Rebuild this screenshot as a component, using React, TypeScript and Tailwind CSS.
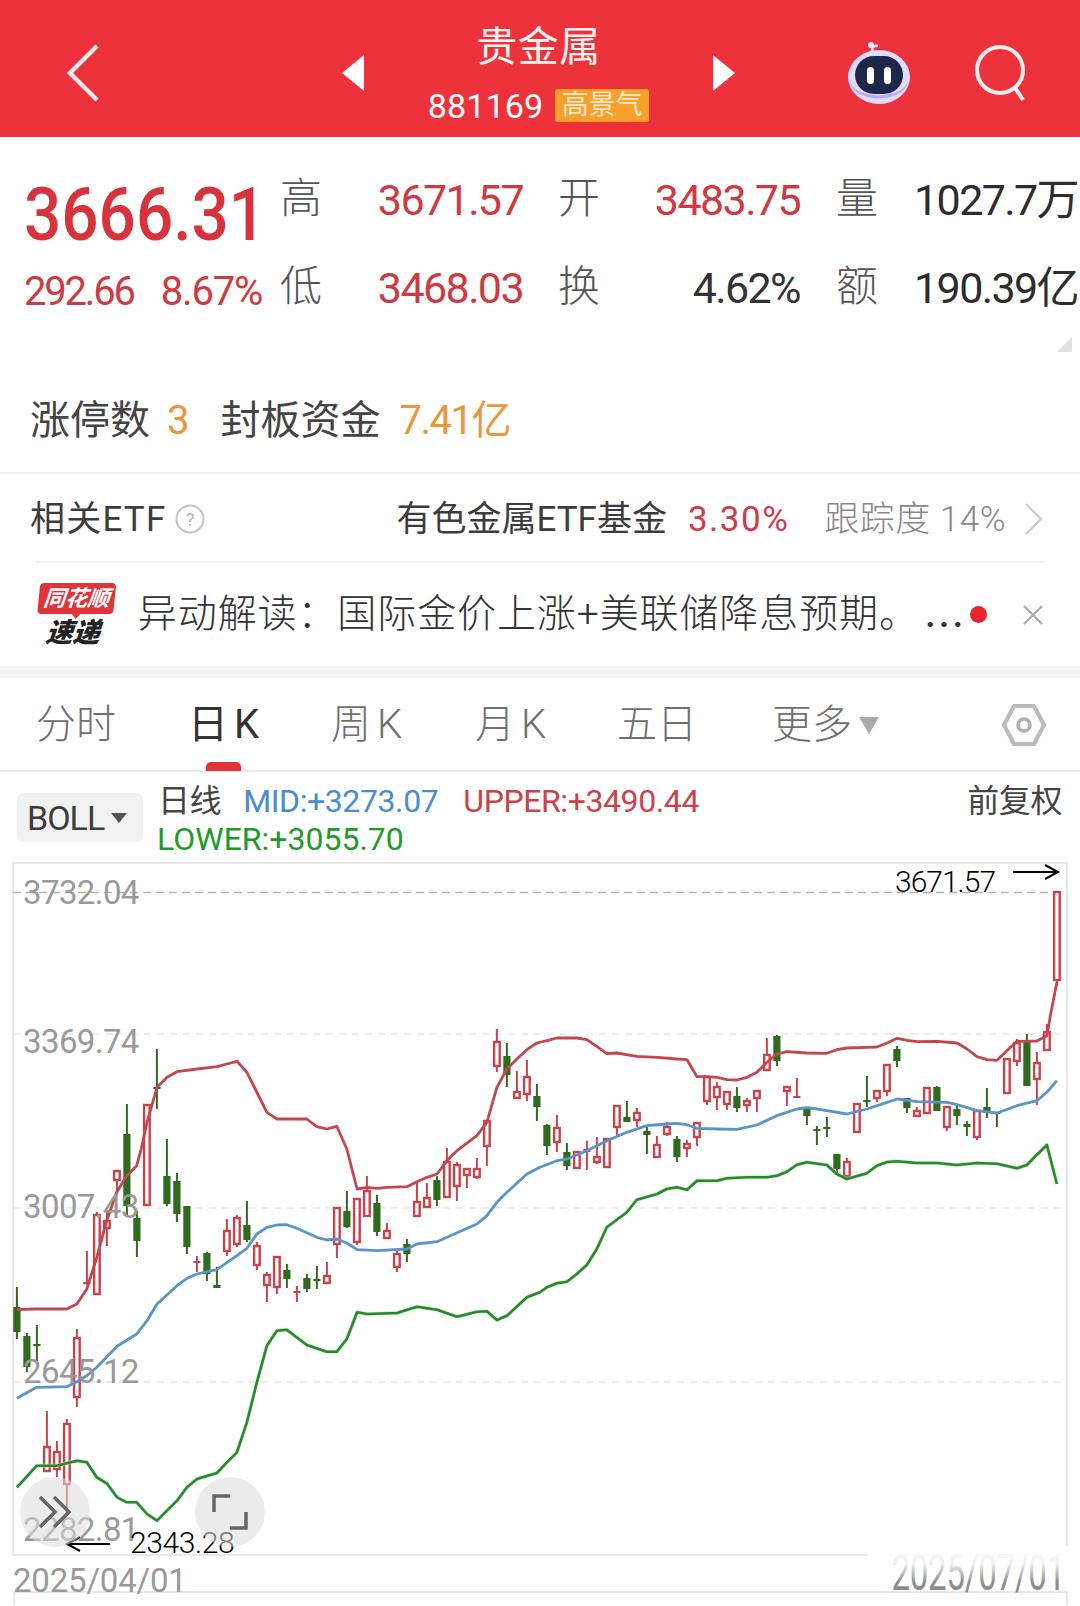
import React from "react";

const F = "font-['Roboto','Noto_Sans_CJK_SC',sans-serif]";

type P = [number, number];
const L = (z: number) => z / 2.904;
const R = (z: number) => 540 + z / 2.904;
const Y1 = (z: number) => 860 + z / 3;
const Y2 = (z: number) => 1240 + z / 3;
const pts = (a: number[], fx: (n: number) => number, fy: (n: number) => number): P[] => {
  const o: P[] = [];
  for (let i = 0; i < a.length; i += 2) o.push([fx(a[i]), fy(a[i + 1])]);
  return o;
};
const toD = (p: P[]) => "M" + p.map((q) => q[0].toFixed(1) + " " + q[1].toFixed(1)).join("L");

const upper = [
  ...pts([49, 212, 100, 210, 194, 210, 223, 195, 252, 150], L, Y2),
  ...pts([281, 1195, 310, 1085, 339, 1000, 368, 950, 397, 920, 410, 870, 427, 790, 456, 685, 485, 655, 514, 638, 572, 630, 630, 623, 659, 615, 688, 607, 717, 640, 775, 760, 804, 780, 891, 780, 920, 803, 949, 810, 978, 802, 1007, 870, 1037, 990, 1066, 985, 1095, 988, 1124, 985, 1182, 983, 1211, 968, 1240, 955, 1269, 945, 1298, 905, 1327, 875, 1385, 830, 1414, 790, 1443, 685, 1472, 630, 1501, 600, 1530, 572, 1559, 552], L, Y1),
  ...pts([20, 545, 49, 537, 107, 537, 136, 542, 165, 562, 194, 584, 223, 582, 281, 592, 340, 595, 397, 600, 427, 602, 456, 653, 485, 653, 514, 655, 543, 662, 572, 663, 601, 655, 630, 640, 659, 610, 688, 585, 717, 578, 775, 582, 833, 583, 862, 572, 891, 567, 949, 565, 978, 564, 1008, 552, 1037, 538, 1066, 544, 1095, 548, 1153, 547, 1211, 552, 1240, 570, 1269, 593, 1298, 602, 1327, 604, 1356, 575, 1385, 547, 1443, 546, 1472, 530, 1484, 460, 1501, 370], R, Y1),
];
const mid = [
  ...pts([49, 478, 107, 445, 194, 443, 223, 428, 252, 410, 281, 385, 340, 322, 397, 285, 427, 245, 456, 195, 514, 140, 543, 118, 572, 105, 630, 92, 688, 50, 717, 28], L, Y2),
  ...pts([746, 1125, 775, 1105, 804, 1098, 833, 1097, 862, 1108, 920, 1135, 949, 1143, 978, 1140, 1007, 1152, 1037, 1172, 1095, 1175, 1182, 1170, 1211, 1155, 1269, 1148, 1298, 1135, 1385, 1095, 1414, 1070, 1443, 1030, 1472, 1000, 1530, 945], L, Y1),
  ...pts([0, 925, 49, 905, 78, 900, 107, 888, 136, 875, 194, 845, 252, 820, 310, 800, 368, 795, 397, 793, 427, 797, 456, 808, 514, 810, 572, 811, 630, 798, 688, 770, 746, 750, 775, 746, 804, 750, 833, 755, 891, 765, 949, 750, 1008, 730, 1037, 720, 1095, 728, 1182, 730, 1211, 737, 1269, 755, 1327, 762, 1385, 740, 1443, 725, 1472, 700, 1501, 665], R, Y1),
];
const lower = [
  ...pts([49, 745, 107, 680, 165, 680, 223, 665, 252, 670, 281, 715, 310, 733, 340, 775, 368, 790, 397, 790, 427, 825, 456, 845, 514, 785, 543, 745, 572, 720, 630, 702, 659, 670, 688, 640, 717, 550, 746, 430, 775, 320, 804, 275, 833, 272, 891, 318, 949, 338, 978, 338, 1007, 300, 1037, 220, 1066, 225, 1153, 222, 1211, 203, 1269, 212, 1327, 233, 1385, 218, 1414, 217, 1443, 243, 1472, 230, 1530, 175], L, Y2),
  ...pts([0, 160, 20, 145, 49, 133, 78, 128, 107, 105, 136, 78, 165, 30], R, Y2),
  ...pts([194, 1105, 252, 1060, 281, 1022, 340, 1005, 368, 990, 397, 985, 427, 992, 456, 965, 514, 965, 543, 958, 601, 955, 659, 955, 688, 950, 717, 938, 746, 917, 775, 910, 833, 918, 862, 945, 891, 960, 949, 943, 978, 920, 1008, 909, 1037, 907, 1095, 912, 1153, 912, 1211, 918, 1269, 912, 1327, 914, 1385, 928, 1414, 918, 1443, 887, 1472, 858, 1501, 975], R, Y1),
];

// [red?, wickTop, bodyTop, bodyBottom, wickBottom], one per trading day, 10px apart
const candles: [number, number, number, number, number][] = [
  [0, 1288, 1308, 1333, 1340], [0, 1334, 1337, 1368, 1373], [0, 1326, 1345, 1347, 1362], [1, 1412, 1448, 1472, 1472],
  [1, 1442, 1453, 1470, 1478], [1, 1420, 1425, 1485, 1516], [1, 1330, 1339, 1398, 1408], [1, 1252, 1283, 1285, 1286],
  [1, 1213, 1216, 1295, 1295], [1, 1213, 1222, 1229, 1247], [1, 1172, 1172, 1181, 1195], [0, 1105, 1135, 1207, 1217],
  [0, 1212, 1219, 1242, 1258], [1, 1106, 1106, 1206, 1206], [0, 1050, 1088, 1090, 1110], [0, 1140, 1177, 1205, 1207],
  [0, 1174, 1182, 1215, 1223], [0, 1207, 1207, 1248, 1255], [1, 1257, 1262, 1264, 1273], [0, 1253, 1254, 1275, 1282],
  [0, 1268, 1286, 1289, 1289], [1, 1220, 1232, 1252, 1257], [1, 1216, 1219, 1245, 1248], [0, 1202, 1226, 1241, 1243],
  [1, 1243, 1247, 1266, 1271], [1, 1273, 1276, 1286, 1303], [1, 1258, 1258, 1288, 1295], [0, 1265, 1271, 1280, 1289],
  [1, 1287, 1292, 1294, 1303], [0, 1275, 1279, 1290, 1293], [0, 1267, 1280, 1282, 1290], [1, 1263, 1277, 1284, 1284],
  [1, 1209, 1209, 1245, 1259], [0, 1192, 1212, 1228, 1229], [1, 1200, 1200, 1243, 1246], [1, 1177, 1192, 1217, 1218],
  [0, 1196, 1204, 1233, 1237], [1, 1224, 1232, 1239, 1239], [1, 1251, 1255, 1268, 1273], [0, 1240, 1245, 1255, 1263],
  [1, 1183, 1203, 1217, 1217], [1, 1184, 1199, 1208, 1208], [0, 1177, 1181, 1201, 1207], [1, 1149, 1163, 1198, 1198],
  [1, 1163, 1166, 1187, 1202], [1, 1170, 1170, 1176, 1189], [1, 1159, 1170, 1178, 1180], [1, 1122, 1122, 1147, 1167],
  [1, 1030, 1043, 1067, 1073], [0, 1044, 1057, 1076, 1088], [1, 1072, 1093, 1099, 1099], [1, 1061, 1078, 1095, 1102],
  [0, 1085, 1097, 1108, 1122], [0, 1125, 1126, 1147, 1156], [1, 1116, 1129, 1143, 1153], [0, 1144, 1153, 1167, 1171],
  [1, 1153, 1153, 1169, 1170], [1, 1142, 1150, 1153, 1171], [1, 1138, 1158, 1163, 1165], [1, 1140, 1140, 1168, 1168],
  [1, 1107, 1107, 1128, 1136], [0, 1102, 1118, 1123, 1123], [1, 1109, 1114, 1121, 1128], [0, 1126, 1132, 1136, 1155],
  [1, 1137, 1146, 1158, 1158], [1, 1123, 1128, 1135, 1137], [0, 1137, 1140, 1158, 1163], [1, 1141, 1145, 1149, 1158],
  [1, 1123, 1124, 1138, 1147], [1, 1078, 1078, 1102, 1106], [1, 1083, 1088, 1098, 1111], [1, 1092, 1093, 1105, 1111],
  [0, 1088, 1097, 1109, 1113], [1, 1099, 1102, 1106, 1113], [1, 1092, 1092, 1099, 1113], [1, 1039, 1056, 1071, 1071],
  [0, 1036, 1037, 1062, 1067], [1, 1088, 1088, 1092, 1107], [1, 1079, 1097, 1099, 1099], [0, 1110, 1110, 1117, 1126],
  [0, 1127, 1130, 1131, 1146], [0, 1118, 1128, 1130, 1138], [0, 1155, 1155, 1170, 1175], [1, 1159, 1163, 1177, 1177],
  [1, 1105, 1105, 1133, 1133], [0, 1077, 1101, 1103, 1108], [1, 1091, 1092, 1099, 1103], [1, 1066, 1066, 1092, 1097],
  [0, 1047, 1050, 1062, 1068], [0, 1099, 1099, 1109, 1114], [1, 1108, 1112, 1117, 1117], [1, 1089, 1089, 1114, 1114],
  [0, 1087, 1088, 1112, 1112], [1, 1108, 1108, 1128, 1132], [0, 1107, 1110, 1117, 1126], [0, 1122, 1125, 1128, 1137],
  [1, 1112, 1112, 1138, 1141], [0, 1089, 1108, 1114, 1119], [0, 1113, 1113, 1115, 1128], [1, 1060, 1060, 1094, 1094],
  [1, 1040, 1044, 1062, 1067], [0, 1035, 1042, 1087, 1087], [1, 1053, 1064, 1080, 1106], [1, 1025, 1033, 1051, 1051],
  [1, 893, 893, 981, 987],
];

function Chart() {
  return (
    <svg className="absolute inset-0" width="1056" height="694" viewBox="12 863 1056 694">
      <line x1="13" x2="1066" y1="893.5" y2="893.5" stroke="#bdb68f" strokeWidth="1.6" strokeDasharray="8 5" />
      {[1035, 1209, 1383].map((y) => (
        <line key={y} x1="14" x2="1065" y1={y} y2={y} stroke="#dddddd" strokeWidth="1.2" strokeDasharray="7 6" />
      ))}
      {candles.map((c, i) => {
        const x = 16.9 + i * 10;
        const col = c[0] ? "#c9434c" : "#2f6a1f";
        const [, wt, bt, bb, wb] = c;
        const thin = bb - bt <= 3;
        return (
          <g key={i}>
            {wt < bt && <line x1={x} x2={x} y1={wt} y2={bt} stroke={col} strokeWidth="2" />}
            {wb > bb && <line x1={x} x2={x} y1={bb} y2={wb} stroke={col} strokeWidth="2" />}
            {c[0] && !thin ? (
              <rect x={x - 2.8} y={bt} width="5.6" height={bb - bt} fill="none" stroke={col} strokeWidth="2.4" />
            ) : (
              <rect x={x - 3.6} y={bt} width="7.2" height={Math.max(bb - bt, 2)} fill={col} />
            )}
          </g>
        );
      })}
      <path d={toD(lower)} fill="none" stroke="#a8e6a8" strokeWidth="4" strokeLinejoin="round" opacity="0.6" />
      <path d={toD(lower)} fill="none" stroke="#2a862f" strokeWidth="2.6" strokeLinejoin="round" />
      <path d={toD(mid)} fill="none" stroke="#5a94c9" strokeWidth="2.8" strokeLinejoin="round" />
      <path d={toD(upper)} fill="none" stroke="#c4474e" strokeWidth="2.8" strokeLinejoin="round" />
      <path d="M1013 873H1057M1045 866L1058 873L1045 880" fill="none" stroke="#000" strokeWidth="2" />
      <path d="M110 1545H67M80 1538L67 1545L80 1552" fill="none" stroke="#000" strokeWidth="2" />
    </svg>
  );
}

function AxisLabel({ top, children }: { top: string; children: React.ReactNode }) {
  return (
    <span className={`absolute left-[11px] ${top} text-[33px] leading-[40px] text-[#999999] tracking-[-0.6px]`}>{children}</span>
  );
}

function Robot() {
  return (
    <svg width="64" height="66" viewBox="0 0 64 66">
      <path d="M25 14 C24 8 27 5 31 6" fill="none" stroke="#eef" strokeWidth="2.5" />
      <circle cx="24" cy="5" r="3" fill="#f3eaff" />
      <ellipse cx="32" cy="37" rx="31" ry="27" fill="#e4dcff" />
      <path d="M3 41 C8 60 56 60 61 41 C58 64 6 64 3 41Z" fill="#b9a9f5" />
      <rect x="8" y="16" width="48" height="38" rx="19" fill="#1d2748" />
      <rect x="20" y="27" width="7" height="17" rx="3.5" fill="#fff" />
      <rect x="37" y="27" width="7" height="17" rx="3.5" fill="#fff" />
    </svg>
  );
}

function Stat({ label, value, tone, h }: { label: string; value: React.ReactNode; tone: string; h: string }) {
  return (
    <div className={`flex ${h} items-center justify-between`}>
      <span className="-ml-[2px] -mt-[3px] text-[42px] font-light leading-none text-[#555555]">{label}</span>
      <span className={`text-[43px] font-normal leading-none tracking-[-1.6px] ${tone}`}>{value}</span>
    </div>
  );
}

const TABS: [string, string, string][] = [
  ["分时", "", "w-[152px]"],
  ["日", "K", "w-[143px]"],
  ["周", "K", "w-[144px]"],
  ["月", "K", "w-[142px]"],
  ["五日", "", "w-[155px]"],
];

export default function App() {
  return (
    <div className={`${F} relative h-[1606px] w-[1080px] overflow-hidden bg-white`}>
      {/* header */}
      <header className="flex h-[137px] items-center bg-[#ee323c] pt-[8px] text-white">
        <svg className="ml-[66px]" width="34" height="60" viewBox="0 0 34 60">
          <path d="M31 3L4 30L31 57" fill="none" stroke="#ffe9e9" strokeWidth="4.5" />
        </svg>
        <svg className="ml-[241px]" width="24" height="36" viewBox="0 0 24 36">
          <path d="M23 0V36L1 18Z" fill="#fff" />
        </svg>
        <div className="mt-[2px] flex w-[347px] flex-col items-center">
          <div className="text-[41px] font-normal leading-[46px] tracking-[0.5px] text-[#fff4f0]">贵金属</div>
          <div className="mt-[18px] flex items-center">
            <span className="text-[34px] leading-[36px] tracking-[0.1px]">881169</span>
            <span className="ml-[12px] flex h-[33px] w-[94px] items-center justify-center rounded-[3px] bg-[#f9a02c] text-[27px] leading-none text-[#ffeccc]">
              高景气
            </span>
          </div>
        </div>
        <svg width="24" height="36" viewBox="0 0 24 36">
          <path d="M1 0V36L23 18Z" fill="#fff" />
        </svg>
        <div className="ml-[111px] w-[64px]">
          <Robot />
        </div>
        <svg className="ml-[63px]" width="56" height="58" viewBox="0 0 56 58">
          <circle cx="26" cy="26" r="23" fill="none" stroke="#ffeeee" strokeWidth="4" />
          <path d="M40 42L49 56" fill="none" stroke="#ffeeee" strokeWidth="4" />
        </svg>
      </header>

      {/* quote */}
      <section className="relative h-[222px] pt-[19px]">
        <div className="flex pl-[24px]">
          <div className="w-[258px]">
            <div className="flex h-[93px] origin-left scale-x-[0.875] items-end text-[75px] font-medium leading-[70px] text-[#d8333c]">3666.31</div>
            <div className="flex h-[86px] items-center text-[40px] font-normal leading-none text-[#cf3a42]">
              <span className="tracking-[-2.2px]">292.66</span>
              <span className="ml-[27px] tracking-[-1.2px]">8.67%</span>
            </div>
          </div>
          <div className="w-[241px]">
            <Stat h="h-[88px]" label="高" value="3671.57" tone="text-[#cf3a42]" />
            <Stat h="h-[89px]" label="低" value="3468.03" tone="text-[#cf3a42]" />
          </div>
          <div className="ml-[37px] w-[240px]">
            <Stat h="h-[88px]" label="开" value="3483.75" tone="text-[#cf3a42]" />
            <Stat h="h-[89px]" label="换" value="4.62%" tone="text-[#333333]" />
          </div>
          <div className="ml-[38px] w-[240px]">
            <Stat h="h-[88px]" label="量" value="1027.7万" tone="text-[#2d2d2d]" />
            <Stat h="h-[89px]" label="额" value="190.39亿" tone="text-[#2d2d2d]" />
          </div>
        </div>
        <svg className="absolute right-[8px] top-[200px]" width="15" height="15" viewBox="0 0 15 15">
          <path d="M15 0V15H0Z" fill="#e2e2e2" />
        </svg>
      </section>

      {/* limit-up */}
      <div className="flex h-[115px] items-center border-b-2 border-[#f0f0f0] pt-[10px] pl-[30px] text-[40px] font-normal leading-none text-[#444444]">
        <span>涨停数</span>
        <span className="ml-[17px] text-[#e9973f]">3</span>
        <span className="ml-[31px]">封板资金</span>
        <span className="ml-[19px] tracking-[-1.5px] text-[#e9973f]">7.41亿</span>
      </div>

      {/* ETF */}
      <div className="flex h-[87px] items-center pl-[30px] pt-[3px] text-[35px] leading-none">
        <span className="tracking-[1.2px] text-[#3c3c3c]">相关ETF</span>
        <svg className="ml-[9px]" width="30" height="32" viewBox="0 0 30 32">
          <circle cx="15" cy="16" r="13.5" fill="none" stroke="#c4c4c4" strokeWidth="2" />
          <text x="15" y="23" textAnchor="middle" fontSize="19" fill="#b8b8b8">?</text>
        </svg>
        <span className="ml-[191px] text-[#3c3c3c]">有色金属ETF基金</span>
        <span className="ml-[21px] tracking-[1.5px] text-[#d23b4b]">3.30%</span>
        <span className="ml-[35px] font-light tracking-[0.5px] text-[#888888]">跟踪度 14%</span>
        <svg className="ml-[18px]" width="20" height="34" viewBox="0 0 20 34">
          <path d="M2 2L17 17L2 32" fill="none" stroke="#cccccc" strokeWidth="2.4" />
        </svg>
      </div>

      {/* alert */}
      <div className="ml-[36px] mr-[35px] border-t-2 border-[#f1f1f1]">
        <div className="flex h-[103px] items-center">
          <div className="flex w-[78px] -skew-x-6 flex-col items-center">
            <div className="relative flex h-[31px] w-[76px] items-center justify-center rounded-[4px] bg-[#e0333a] text-[22px] font-bold italic leading-none text-white">
              同花顺
              <span className="absolute -bottom-[5px] left-[34px] h-0 w-0 border-x-[5px] border-t-[6px] border-x-transparent border-t-[#e0333a]" />
            </div>
            <div className="mt-[5px] text-[27px] font-black italic leading-[28px] text-[#222222]">速递</div>
          </div>
          <div className="ml-[24px] flex w-[834px] items-baseline whitespace-nowrap text-[39px] font-light leading-none tracking-[0.9px] text-[#333333]">
            异动解读：国际金价上涨+美联储降息预期。
            <span className="ml-[6px] font-medium tracking-[3px]">...</span>
          </div>
          <span className="h-[17px] w-[17px] shrink-0 rounded-full bg-[#e5262e]" />
          <svg className="ml-[34px] shrink-0" width="24" height="24" viewBox="0 0 24 24">
            <path d="M3 3L21 21M21 3L3 21" fill="none" stroke="#aaaaaa" strokeWidth="2.2" />
          </svg>
        </div>
      </div>

      <div className="h-[12px] bg-[#f5f5f5]" />

      {/* tabs */}
      <nav className="relative flex h-[94px] items-center border-b-2 border-[#e9e9e9] pt-[2px] pl-[36px] text-[40px] font-light leading-none text-[#6f6f6f]">
        {TABS.map(([a, b, w], i) => (
          <div key={a} className={`${w} flex items-center ${i === 1 ? "font-normal text-[#333333]" : ""}`}>
            <span>{a}</span>
            {b && <span className="ml-[6px] text-[40px]">{b}</span>}
          </div>
        ))}
        <span>更多</span>
        <svg className="ml-[7px]" width="20" height="17" viewBox="0 0 20 17">
          <path d="M0 0H20L10 17Z" fill="#aaaaaa" />
        </svg>
        <svg className="ml-[123px]" width="44" height="42" viewBox="0 0 44 42">
          <path d="M12 2H32L42 21L32 40H12L2 21Z" fill="none" stroke="#bbbbbb" strokeWidth="4" strokeLinejoin="round" />
          <circle cx="22" cy="21" r="6" fill="none" stroke="#b0b0b0" strokeWidth="3.5" />
        </svg>
        <span className="absolute left-[206px] top-[84px] h-[9px] w-[35px] rounded-t-[5px] bg-[#e1323a]" />
      </nav>

      {/* indicator */}
      <div className="flex h-[90px] pl-[17px] text-[32px] leading-none">
        <div className="mt-[21px] flex h-[49px] w-[126px] items-center rounded-[6px] bg-[#f2f2f2] pl-[10px] text-[34px] text-[#3c3c3c] tracking-[-1px]">
          BOLL
          <svg className="ml-[7px]" width="16" height="10" viewBox="0 0 16 10">
            <path d="M0 0H16L8 10Z" fill="#555555" />
          </svg>
        </div>
        <div className="ml-[15px] flex-1 pt-[9px] tracking-[-0.4px]">
          <div className="flex h-[39px] items-center">
            <span className="text-[#444444]">日线</span>
            <span className="ml-[22px] text-[#4a8ccc]">MID:+3273.07</span>
            <span className="ml-[25px] text-[#c8444c]">UPPER:+3490.44</span>
            <span className="ml-auto mr-[18px] text-[#444444]">前复权</span>
          </div>
          <div className="-ml-[1px] flex h-[38px] items-center tracking-[0px] text-[#1f9a2a]">LOWER:+3055.70</div>
        </div>
      </div>

      {/* chart */}
      <div className="relative ml-[12px] h-[694px] w-[1056px] border-2 border-[#e8e8e8]">
        <div className="absolute -inset-[2px]">
          <Chart />
          <AxisLabel top="top-[11px]">3732.04</AxisLabel>
          <AxisLabel top="top-[160px]">3369.74</AxisLabel>
          <AxisLabel top="top-[325px]">3007.43</AxisLabel>
          <AxisLabel top="top-[490px]">2645.12</AxisLabel>
          <AxisLabel top="top-[648px]">2282.81</AxisLabel>
          <span className="absolute left-[883px] top-[2px] text-[30px] font-light leading-[36px] tracking-[-1px] text-black">3671.57</span>
          <span className="absolute left-[118px] top-[663px] text-[30px] font-light leading-[36px] tracking-[-0.4px] text-black">2343.28</span>
          <div className="absolute left-[8px] top-[615px] flex h-[70px] w-[70px] items-center justify-center rounded-full bg-[#dcdcdc]/55">
            <svg width="34" height="36" viewBox="0 0 34 36">
              <path d="M2 3L17 18L2 33M16 3L31 18L16 33" fill="none" stroke="#666666" strokeWidth="3.5" />
            </svg>
          </div>
          <div className="absolute left-[183px] top-[615px] flex h-[70px] w-[70px] items-center justify-center rounded-full bg-[#dcdcdc]/55">
            <svg width="36" height="36" viewBox="0 0 36 36">
              <path d="M2 18V2H18M34 18V34H18" fill="none" stroke="#666666" strokeWidth="3.5" />
            </svg>
          </div>
        </div>
      </div>

      {/* dates */}
      <div className="relative ml-[13px] flex h-[37px] w-[1055px] items-center justify-between border-b-2 border-[#e8e8e8] pt-[14px] text-[33px] leading-none text-[#999999] tracking-[-0.2px]">
        <span>2025/04/01</span>
        <span className="mr-[3px] block origin-bottom scale-y-[1.5] text-[#8c8c8c]">2025/07/01</span>
        <span className="absolute -top-[10px] right-[0px] h-[36px] w-[200px] bg-gradient-to-b from-white via-white/85 to-transparent" />
      </div>
      <div className="ml-[13px] h-[12px] w-[1055px] border-x-2 border-[#e8e8e8]" />
    </div>
  );
}
